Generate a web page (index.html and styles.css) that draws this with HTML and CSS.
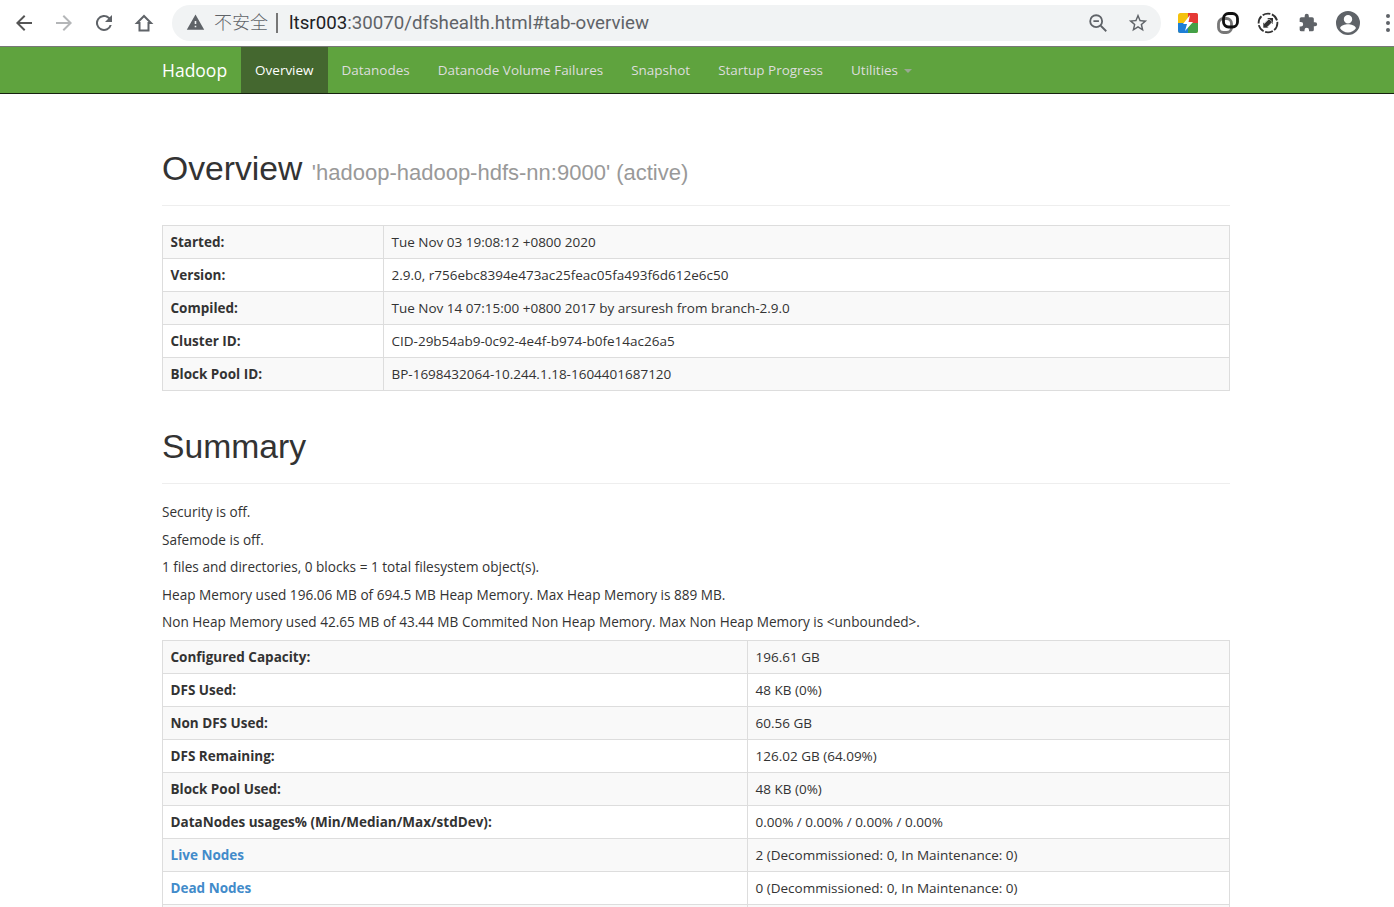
FILE: index.html
```
<!DOCTYPE html>
<html lang="zh">
<head>
<meta charset="utf-8">
<title>Namenode information</title>
<link rel="stylesheet" href="styles.css">
</head>
<body>
<header class="chrome">
  <svg class="tb back" viewBox="0 0 24 24"><path d="M20 11H7.800l5.600-5.600L12 4l-8 8 8 8 1.400-1.400L7.800 13H20z"/></svg>
  <svg class="tb fwd" viewBox="0 0 24 24"><path d="M12 4l-1.400 1.400 5.600 5.600H4v2h12.200l-5.600 5.600L12 20l8-8z"/></svg>
  <svg class="tb reload" viewBox="0 0 24 24"><path d="M17.650 6.350A8 8 0 1 0 19.730 14h-2.080A6 6 0 1 1 12 6c1.660 0 3.140.69 4.220 1.780L13 11h7V4z"/></svg>
  <svg class="tb home" viewBox="0 0 24 24"><path class="line" d="M12 5L5 12H7.500V19.500H16.500V12H19Z"/></svg>
  <div class="omnibox">
    <svg class="warn" viewBox="0 0 24 24"><path d="M1 21h22L12 2zm12-3h-2v-2h2zm0-4h-2v-4h2z"/></svg>
    <span class="insecure">不安全</span><span class="sep"></span>
    <span class="url"><span class="host">ltsr003</span>:30070/dfshealth.html#tab-overview</span>
    <svg class="omni-ic zoom-ic" viewBox="0 0 24 24"><circle class="line" cx="10" cy="10" r="6.500"/><path class="line" d="M15 15l6 6M7 10h6"/></svg>
    <svg class="omni-ic star" viewBox="0 0 24 24"><path d="M22 9.200l-7.200-.6L12 2 9.200 8.600 2 9.200l5.500 4.800L5.800 21 12 17.300 18.200 21l-1.600-7zM12 15.400l-3.800 2.300 1-4.300-3.300-2.900 4.400-.4L12 6.100l1.700 4 4.400.4-3.300 2.900 1 4.300z"/></svg>
  </div>
  <svg class="ext" viewBox="0 0 22 22">
    <rect x="1" y="1" width="20" height="20" rx="2.500" fill="#f4c20d"/>
    <path d="M11 1h8a2 2 0 0 1 2 2v8H11z" fill="#e53935"/>
    <path d="M1 11h10v10H3a2 2 0 0 1-2-2z" fill="#1e7fd6"/>
    <path d="M11 11h10v8a2 2 0 0 1-2 2h-8z" fill="#43a047"/>
    <path d="M13 3L6 12h4l-2 7 8-9h-4.500z" fill="#fff"/>
  </svg>
  <svg class="ext" viewBox="0 0 22 22" fill="none">
    <rect x="1.500" y="6.500" width="13" height="14" rx="5" stroke="#777" stroke-width="2.800"/>
    <rect x="6.500" y="1.500" width="14" height="13.500" rx="5" stroke="#111" stroke-width="2.800"/>
  </svg>
  <svg class="ext" viewBox="0 0 22 22">
    <circle cx="11" cy="11" r="9.400" fill="none" stroke="#333" stroke-width="1.800" stroke-dasharray="8 1.600"/>
    <path d="M6.500 12l5-5-1.500-1h6v6l-1.500-1.500-4.500 4.500z" fill="#333"/>
    <path d="M15.500 10l-5 5 1.500 1H6v-6l1.500 1.500 4.500-4.500z" fill="#333" stroke="#fff" stroke-width=".6"/>
  </svg>
  <svg class="tb puzzle" viewBox="0 0 24 24"><path d="M20.500 11H19V7a2 2 0 0 0-2-2h-4V3.500a2.500 2.500 0 0 0-5 0V5H4a2 2 0 0 0-2 2v3.800h1.500a2.700 2.700 0 0 1 0 5.400H2V20a2 2 0 0 0 2 2h3.800v-1.500a2.700 2.700 0 0 1 5.400 0V22H17a2 2 0 0 0 2-2v-4h1.500a2.500 2.500 0 0 0 0-5z"/></svg>
  <svg class="tb avatar" viewBox="0 0 24 24"><path d="M12 0a12 12 0 1 0 0 24 12 12 0 0 0 0-24zm0 4a4.200 4.200 0 1 1 0 8.400A4.200 4.200 0 0 1 12 4zm0 17.500c-3.300 0-6.200-1.700-7.900-4.200C4.200 14.700 9.400 13.300 12 13.300s7.800 1.400 7.900 4c-1.700 2.500-4.600 4.200-7.900 4.200z"/></svg>
  <svg class="menu" viewBox="0 0 6 22"><circle cx="3" cy="4" r="2"/><circle cx="3" cy="11" r="2"/><circle cx="3" cy="18" r="2"/></svg>
</header>

<nav class="navbar">
  <a class="brand">Hadoop</a>
  <ul class="nav">
    <li class="active">Overview</li>
    <li>Datanodes</li>
    <li>Datanode Volume Failures</li>
    <li>Snapshot</li>
    <li>Startup Progress</li>
    <li>Utilities <span class="caret"></span></li>
  </ul>
</nav>

<main class="container">
  <div class="page-header first">
    <h1>Overview <small>'hadoop-hadoop-hdfs-nn:9000' (active)</small></h1>
  </div>
  <table class="info">
    <tr><th class="w1">Started:</th><td>Tue Nov 03 19:08:12 +0800 2020</td></tr>
    <tr><th>Version:</th><td>2.9.0, r756ebc8394e473ac25feac05fa493f6d612e6c50</td></tr>
    <tr><th>Compiled:</th><td>Tue Nov 14 07:15:00 +0800 2017 by arsuresh from branch-2.9.0</td></tr>
    <tr><th>Cluster ID:</th><td>CID-29b54ab9-0c92-4e4f-b974-b0fe14ac26a5</td></tr>
    <tr><th>Block Pool ID:</th><td>BP-1698432064-10.244.1.18-1604401687120</td></tr>
  </table>
  <div class="page-header">
    <h1>Summary</h1>
  </div>
  <p>Security is off.</p>
  <p>Safemode is off.</p>
  <p>1 files and directories, 0 blocks = 1 total filesystem object(s).</p>
  <p>Heap Memory used 196.06 MB of 694.5 MB Heap Memory. Max Heap Memory is 889 MB.</p>
  <p>Non Heap Memory used 42.65 MB of 43.44 MB Commited Non Heap Memory. Max Non Heap Memory is &lt;unbounded&gt;.</p>
  <table class="info last">
    <tr><th class="w2">Configured Capacity:</th><td>196.61 GB</td></tr>
    <tr><th>DFS Used:</th><td>48 KB (0%)</td></tr>
    <tr><th>Non DFS Used:</th><td>60.56 GB</td></tr>
    <tr><th>DFS Remaining:</th><td>126.02 GB (64.09%)</td></tr>
    <tr><th>Block Pool Used:</th><td>48 KB (0%)</td></tr>
    <tr><th>DataNodes usages% (Min/Median/Max/stdDev):</th><td>0.00% / 0.00% / 0.00% / 0.00%</td></tr>
    <tr><th><a>Live Nodes</a></th><td>2 (Decommissioned: 0, In Maintenance: 0)</td></tr>
    <tr><th><a>Dead Nodes</a></th><td>0 (Decommissioned: 0, In Maintenance: 0)</td></tr>
    <tr class="peek"><th></th><td></td></tr>
  </table>
</main>
</body>
</html>
```
FILE: styles.css
```
* { box-sizing: border-box; }
html, body { margin: 0; height: 907px; overflow: hidden; background: #fff; }
body { font: 13.600px/20px "Open Sans", "Noto Sans CJK SC", sans-serif; color: #333; }

.chrome { height: 47px; display: flex; align-items: center; background: #fff; border-bottom: 1px solid #777; padding: 0 0 1px 12px; }
.tb { width: 24px; height: 24px; fill: #5f6368; flex: none; }
.line { fill: none; stroke: #5f6368; stroke-width: 2; }
.back { fill: #555; margin-right: 16px; }
.fwd { fill: #b4b6b8; margin-right: 16px; }
.reload { margin-right: 16px; }
.home { margin-right: 16px; }
.omnibox { width: 989px; height: 36px; background: #f1f3f4; border-radius: 18px; display: flex; align-items: center; padding-left: 14px; font: 18.700px/24px Roboto, sans-serif; color: #5f6368; margin-right: 16px; }
.warn { width: 19px; height: 19px; fill: #5f6368; flex: none; }
.insecure { margin: 0 0 3px 9px; font-family: "Noto Sans CJK SC", sans-serif; font-size: 18px; font-weight: 300; }
.sep { width: 1.500px; height: 20px; background: #777; margin: 0 11.500px 0 8px; }
.url { flex: 1; white-space: nowrap; }
.host { color: #202124; }
.omni-ic { width: 22px; height: 22px; fill: #5f6368; flex: none; }
.zoom-ic { margin-right: 18px; }
.star { margin-right: 12px; }
.ext { width: 22px; height: 22px; flex: none; margin-right: 18px; }
.puzzle { width: 20px; height: 20px; margin: 0 18px 0 1px; }
.avatar { width: 24px; height: 24px; margin-right: 25px; }
.menu { width: 6px; height: 22px; fill: #5f6368; flex: none; }

.navbar { height: 47px; background: #5fa33e; border-bottom: 1px solid #16210f; display: flex; padding-left: 162px; }
.brand { font-size: 17.500px; line-height: 47px; color: #fff; margin-right: 14px; }
.nav { list-style: none; margin: 0; padding: 0; display: flex; }
.nav li { padding: 0 14px; line-height: 47px; font-size: 13.480px; color: #ddd; white-space: nowrap; }
.nav li.active { background: #44672f; color: #fff; }
.caret { display: inline-block; width: 0; height: 0; margin-left: 2px; vertical-align: middle; border-top: 4px solid #9aa893; border-left: 4px solid transparent; border-right: 4px solid transparent; }

.container { width: 1068px; margin-left: 162px; }
.page-header { margin: 33px 0 18px; padding-bottom: 15px; border-bottom: 1px solid #eee; }
.page-header.first { margin: 52px 0 19px; }
h1 { margin: 0; font: 500 33.700px/44px "Liberation Sans", Arial, sans-serif; color: #333; }
small { font-size: 22px; line-height: 1; font-weight: 400; color: #999; }
p { margin: 0 0 7.500px; }
.info { width: 100%; border-collapse: collapse; border: 1px solid #ddd; margin-bottom: 20px; table-layout: fixed; font-size: 13.500px; }
.info.last { margin-bottom: 0; }
.info th, .info td { border: 1px solid #ddd; padding: 6px 7.500px; height: 33px; text-align: left; vertical-align: middle; line-height: 20px; }
.info th { font-weight: 700; }
.info tr:nth-child(odd) { background: #f9f9f9; }
.info .peek th, .info .peek td { height: 3px; padding: 0; line-height: 1px; }
.w1 { width: 221px; }
.w2 { width: 585px; }
th a { color: #428bca; }
```
